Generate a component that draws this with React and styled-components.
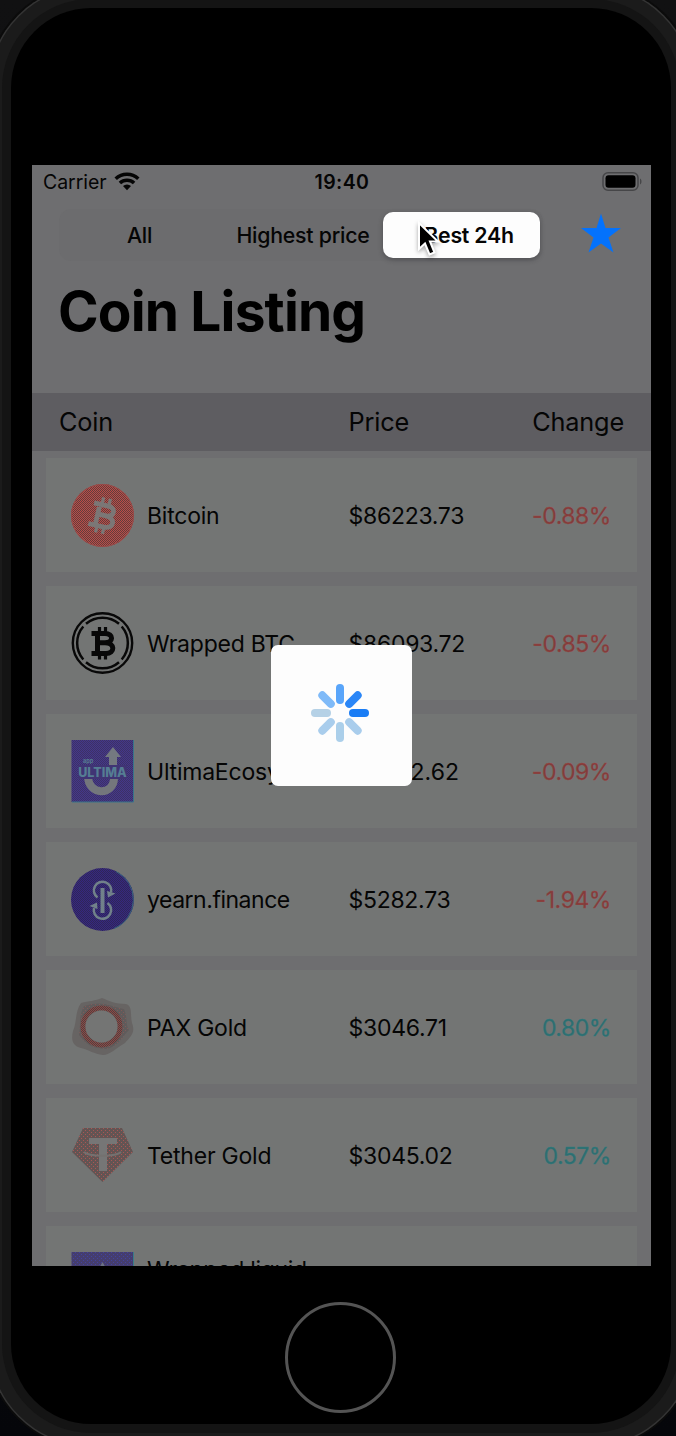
import React from "react";
import styled, { createGlobalStyle } from "styled-components";

const GlobalStyle = createGlobalStyle`
  * { box-sizing: border-box; }
  body {
    margin: 0;
    background: #0c0c0e;
    font-family: Inter, "Liberation Sans", sans-serif;
    color: #050505;
  }
`;

const Desktop = styled.main`
  width: 676px;
  height: 1436px;
  padding: 8px 0 0 11px;
  overflow: hidden;
  background: linear-gradient(#111112, #0c0c0e 50%, #05060a);
`;

const Phone = styled.div`
  display: flex;
  flex-direction: column;
  align-items: center;
  width: 660px;
  height: 1416px;
  padding-top: 157px;
  border-radius: 80px;
  background: #000;
  box-shadow: 0 0 0 9px #141414, 0 0 0 21.5px #1b1b1b, 0 0 0 23px #343434,
    0 0 0 25px #0b0b0b;
`;

const Screen = styled.section`
  position: relative;
  display: flex;
  flex-direction: column;
  flex: none;
  width: 619px;
  height: 1101px;
  margin-left: 1px;
  overflow: hidden;
  background: #6e6e70;
`;

const HomeButton = styled.div`
  flex: none;
  width: 111px;
  height: 111px;
  margin-top: 36px;
  margin-right: 1px;
  border: 3px solid #545454;
  border-radius: 50%;
`;

const StatusBar = styled.header`
  display: grid;
  grid-template-columns: 1fr auto 1fr;
  align-items: center;
  flex: none;
  height: 34px;
  padding: 0 9px 0 11px;
  font-size: 19.5px;
`;

const Carrier = styled.span`
  display: flex;
  align-items: center;
  gap: 7px;
  letter-spacing: -0.05px;

  svg {
    margin-bottom: 2px;
  }
`;

const Clock = styled.span`
  padding-right: 1px;
  font-weight: 600;
  letter-spacing: 0.4px;
`;

const BatteryIcon = styled.svg`
  justify-self: end;
  margin-bottom: 2px;
`;

const Toolbar = styled.nav`
  display: flex;
  flex: none;
  align-items: center;
  justify-content: space-between;
  height: 52px;
  margin-top: 10px;
  padding: 0 29px 0 27px;
`;

const Segments = styled.div`
  display: grid;
  grid-template-columns: 155px 166px 157px;
  width: 484px;
  height: 52px;
  padding: 3px;
  border-radius: 12px;
  background: #6c6c6e;
`;

const Segment = styled.button`
  display: flex;
  align-items: center;
  justify-content: center;
  padding: 0 0 0 ${(p) => p.$shift || 0}px;
  border: 0;
  border-radius: 10px;
  white-space: nowrap;
  font: ${(p) => (p.$active ? 600 : 500)} 21.3px Inter, sans-serif;
  letter-spacing: -0.22px;
  color: #050505;
  background: ${(p) => (p.$active ? "#fdfdfd" : "transparent")};
  box-shadow: ${(p) => (p.$active ? "0 2px 5px rgba(40,40,44,.4)" : "none")};
`;

const StarIcon = styled.svg`
  margin-bottom: 2px;
`;

const Title = styled.h1`
  flex: none;
  margin: 16px 0 0 26px;
  height: 116px;
  font-size: 55px;
  line-height: 68px;
  font-weight: 700;
  letter-spacing: -0.85px;
  color: #000;
`;

const TableHead = styled.div`
  display: grid;
  grid-template-columns: 289.5px 1fr auto;
  align-items: center;
  flex: none;
  height: 58px;
  padding: 0 27px 2px;
  background: #5e5d61;
  font-size: 25.3px;
  letter-spacing: -0.17px;
`;

const List = styled.div`
  display: flex;
  flex-direction: column;
  flex: none;
  gap: 14px;
  padding: 7px 14px 0;
`;

const Row = styled.article`
  display: grid;
  grid-template-columns: 76px 201.5px 1fr auto;
  align-items: center;
  height: 114px;
  padding: 2px 26px 0 25px;
  background: #737574;
  font-size: 23px;
  line-height: 28px;
`;

const Name = styled.span`
  min-height: ${(p) => (p.$lines || 1) * 28}px;
  letter-spacing: ${(p) => p.$spacing || "-0.22px"};
`;

const Price = styled.span`
  letter-spacing: ${(p) => p.$spacing || "-0.28px"};
`;

const Change = styled.span`
  letter-spacing: -0.45px;
  color: ${(p) => (p.$up ? "#2d6e70" : "#803c3b")};
  -webkit-text-stroke: 0.3px ${(p) => (p.$up ? "#2d7d80" : "#a04745")};
`;

const CoinIcon = styled.svg`
  display: block;
  width: 64px;
  height: 64px;
`;

const Loader = styled.div`
  position: absolute;
  left: 239px;
  top: 480px;
  display: grid;
  place-items: center;
  width: 141px;
  height: 141px;
  padding: 0 3px 5px 0;
  border-radius: 7px;
  background: #fdfdfd;
`;

const Cursor = styled.svg`
  position: absolute;
  left: 383px;
  top: 54px;
  filter: drop-shadow(0 2px 2px rgba(0, 0, 0, 0.35));
`;

function Dither({ id, base, dot, size = 2 }) {
  return (
    <pattern id={id} width={size} height={size} patternUnits="userSpaceOnUse">
      <rect width={size} height={size} fill={base} />
      <rect width="1" height="1" fill={dot} />
      <rect x={size / 2} y={size / 2} width="1" height="1" fill={dot} />
    </pattern>
  );
}

const icons = {
  bitcoin: (
    <>
      <Dither id="btc" base="#643c3b" dot="#b84e4a" />
      <circle cx="31.5" cy="31.5" r="31.5" fill="url(#btc)" />
      <circle cx="31.5" cy="31.5" r="31" fill="none" stroke="#9a4b49" />
      <g transform="translate(31.5 31.5) rotate(13)" fill="none" stroke="#7b7776">
        <path d="M-5-12V12M-11-10.500H3.500C12-10.500 12-.5 3.500-.5H-5M3.500-.5C14-.5 14 11 4 11H-12" strokeWidth="4.800" />
        <path d="M-3-18V-11M4-18V-11M-3 11V18M4 11V18" strokeWidth="3.200" />
      </g>
    </>
  ),
  wrapped: (
    <g fill="none" stroke="#080808">
      <circle cx="31.5" cy="31" r="29.7" strokeWidth="2.400" />
      <path d="M15 11.800A25.200 25.200 0 0 1 48 11.800M50.700 14.500A25.200 25.200 0 0 1 50.700 47.500M48 50.200A25.200 25.200 0 0 1 15 50.200M12.300 47.500A25.200 25.200 0 0 1 12.300 14.500" strokeWidth="2.500" />
      <path d="M26.500 21V42M20.500 21.500H34C43 21.500 42.500 30.800 34 30.800H27M34 30.800C44.500 30.800 44 41.500 35 41.500H20.500" strokeWidth="5" />
      <path d="M28.500 15V21M34.500 15V21M28.500 42V47.500M34.500 42V47.500" strokeWidth="3.200" />
    </g>
  ),
  ultima: (
    <>
      <Dither id="ult" base="#3d3166" dot="#44388a" />
      <rect x="0.500" width="62" height="62" fill="url(#ult)" />
      <path d="M62.500 0V62H1" fill="none" stroke="#38758a" />
      <path d="M17 36C17 56 43 56 43 38V31" fill="none" stroke="#74777c" strokeWidth="8" />
      <path d="M42 7L50 17H46V26H38V17H34Z" fill="#747980" />
      <rect x="7" y="25" width="49" height="14" fill="#403474" />
      <text x="31.500" y="37" textAnchor="middle" fontSize="12.500" fontWeight="800" fill="#557d93">ULTIMA</text>
      <text x="12" y="22.500" fontSize="5.500" fontWeight="700" fill="#567b91">app</text>
    </>
  ),
  yearn: (
    <>
      <Dither id="yfi" base="#2f2658" dot="#362880" />
      <circle cx="31.500" cy="31.500" r="31.500" fill="url(#yfi)" />
      <path d="M45 3.500A31.300 31.300 0 0 1 43 60.500" fill="none" stroke="#38647d" />
      <g fill="none" stroke="#71818a" strokeWidth="2.500">
        <path d="M26.500 29.500A8.700 8.700 0 1 1 40 24.500M36.500 35A8.700 8.700 0 1 1 23 40" />
        <path d="M31.500 20V45" strokeWidth="4" />
      </g>
      <path d="M44.500 25.500L37 29.500L36 23ZM18.500 38L26 34.500L26.500 41Z" fill="#71818a" />
    </>
  ),
  pax: (
    <>
      <Dither id="pax" base="#605b5b" dot="#805b59" size={4} />
      <Dither id="paxring" base="#533f3e" dot="#8c4a47" size={2} />
      <path d="M10 7C18 5 24 5 31 2C38 5 45 8 55 8C62 10 59 19 61 27C65 37 59 41 54 47C45 52 39 59 32 59C23 58 18 54 10 52C1 50 0 43 2 35C6 26 4 15 10 7Z" fill="#676463" />
      <path d="M13 10C31 4 39 10 53 13C57 22 54 27 58 34C50 43 46 51 35 53C19 52 15 48 8 39C10 29 7 21 13 10Z" fill="url(#pax)" />
      <circle cx="30.500" cy="30.500" r="18.500" fill="none" stroke="url(#paxring)" strokeWidth="5" />
      <circle cx="30.500" cy="30.500" r="16" fill="#747574" />
    </>
  ),
  tether: (
    <>
      <Dither id="xaut" base="#635453" dot="#a85754" size={4} />
      <path d="M12 4H51L62 28L31.500 58L1 28Z" fill="url(#xaut)" />
      <path d="M18 14H46V20H36V47H28V20H18Z" fill="#767676" />
      <path d="M13 28C18 33 45 33 50 28" fill="none" stroke="#747170" strokeWidth="2" />
    </>
  ),
  liquid: (
    <>
      <Dither id="steth" base="#453d6e" dot="#4143a0" size={4} />
      <rect x="0.500" width="62" height="62" fill="url(#steth)" />
      <path d="M62.500 0V62" stroke="#397c8a" />
      <path d="M31.500 10L43 31L31.500 38L20 31Z" fill="#6b7184" />
    </>
  ),
};

const coins = [
  { icon: "bitcoin", name: "Bitcoin", price: "$86223.73", change: "-0.88%" },
  { icon: "wrapped", name: "Wrapped BTC", price: "$86093.72", change: "-0.85%" },
  { icon: "ultima", name: "UltimaEcosystem", price: "$11382.62", priceSpacing: "0.03px", change: "-0.09%" },
  { icon: "yearn", name: "yearn.finance", nameSpacing: "-0.48px", price: "$5282.73", change: "-1.94%" },
  { icon: "pax", name: "PAX Gold", price: "$3046.71", change: "0.80%", up: true },
  { icon: "tether", name: "Tether Gold", price: "$3045.02", change: "0.57%", up: true },
  { icon: "liquid", name: "Wrapped liquid", nameSpacing: "-0.3px", nameLines: 2, price: "", change: "" },
];

const petals = ["#1a7df5", "#a9cdec", "#abcfea", "#a9cdec", "#b5d1e6", "#7fbaf8", "#59a5fa", "#2a86f7"];

function Spinner() {
  return (
    <svg width="60" height="60" viewBox="-30 -30 60 60">
      {petals.map((color, i) => (
        <rect key={i} x="9" y="-4" width="20" height="8" rx="4" fill={color} transform={`rotate(${i * 45})`} />
      ))}
    </svg>
  );
}

export default function App() {
  return (
    <>
      <GlobalStyle />
      <Desktop>
        <Phone>
          <Screen>
            <StatusBar>
              <Carrier>
                Carrier
                <svg width="26" height="19" viewBox="0 0 26 19">
                  <g fill="none" stroke="#050505" strokeWidth="3.500">
                    <path d="M1.700 6.800A16.300 16.300 0 0 1 24.300 6.800" />
                    <path d="M5.900 11A10.300 10.300 0 0 1 20.100 11" />
                  </g>
                  <path d="M9 14A5.800 5.800 0 0 1 17 14L13 18.300Z" fill="#050505" />
                </svg>
              </Carrier>
              <Clock>19:40</Clock>
              <BatteryIcon width="40" height="19" viewBox="0 0 40 19">
                <rect x="1" y=".8" width="35" height="17.400" rx="5" fill="none" stroke="#464648" strokeWidth="1.500" />
                <rect x="3.500" y="3.200" width="30" height="12.600" rx="3" fill="#000" />
                <path d="M38 6.500C40 7.500 40 11.500 38 12.500Z" fill="#464648" />
              </BatteryIcon>
            </StatusBar>
            <Toolbar>
              <Segments>
                <Segment>All</Segment>
                <Segment $shift={6}>Highest price</Segment>
                <Segment $active $shift={15}>Best 24h</Segment>
              </Segments>
              <StarIcon width="42" height="42" viewBox="0 0 42 42">
                <path d="M21 0.500L25.500 15H41L28.500 24.500L33.500 39.500L21 30.500L8.500 39.500L13.500 24.500L1 15H16.500Z" fill="#0472fc" />
              </StarIcon>
            </Toolbar>
            <Title>Coin Listing</Title>
            <TableHead>
              <span>Coin</span>
              <span>Price</span>
              <span>Change</span>
            </TableHead>
            <List>
              {coins.map((coin) => (
                <Row key={coin.name}>
                  <CoinIcon viewBox="0 0 64 64">{icons[coin.icon]}</CoinIcon>
                  <Name $spacing={coin.nameSpacing} $lines={coin.nameLines}>
                    {coin.name}
                  </Name>
                  <Price $spacing={coin.priceSpacing}>{coin.price}</Price>
                  <Change $up={coin.up}>{coin.change}</Change>
                </Row>
              ))}
            </List>
            <Loader>
              <Spinner />
            </Loader>
            <Cursor width="26" height="40" viewBox="-4 -4 26 40">
              <path d="M0 0V26L6 20.500L10.500 31.500L15.500 29.500L11 18.500H19Z" fill="#000" stroke="#fff" strokeWidth="2" />
            </Cursor>
          </Screen>
          <HomeButton />
        </Phone>
      </Desktop>
    </>
  );
}
